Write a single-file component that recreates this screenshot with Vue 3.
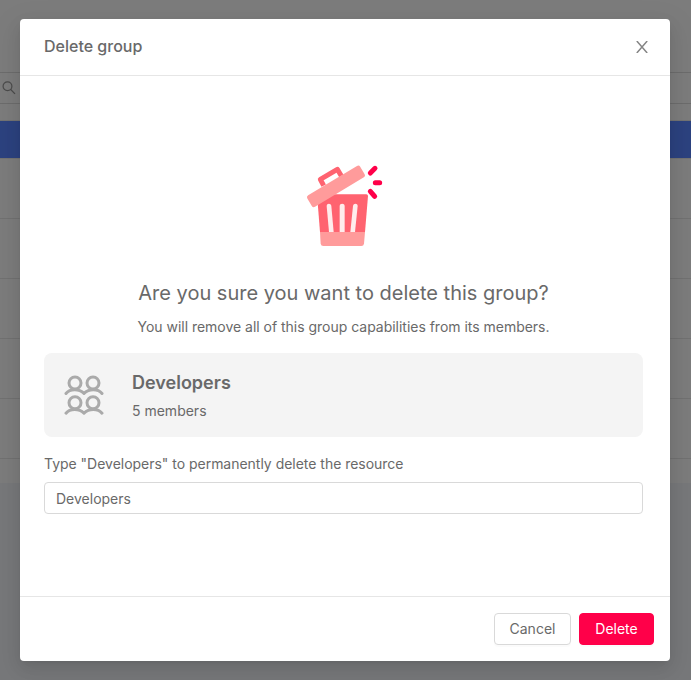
<script setup>
import { ref } from 'vue'

const confirmation = ref('Developers')
const rows = [60, 60, 60, 60, 60]
</script>

<template>
  <div class="page">
    <div class="backdrop">
      <div class="toolbar">
        <svg class="search" width="14" height="14" viewBox="0 0 14 14">
          <circle cx="5.5" cy="5.3" r="4.4" />
          <path d="M8.7 8.5 13 12.8" />
        </svg>
      </div>
      <div class="table">
        <div class="table-head"></div>
        <div v-for="(row, i) in rows" :key="i" class="row"></div>
        <div class="last-row"></div>
      </div>
    </div>
    <div class="overlay">
      <section class="modal">
        <header class="header">
          <h1>Delete group</h1>
          <svg class="close" width="12" height="12" viewBox="0 0 12 12">
            <path d="M.8 0 11.2 12M11.2 0 .8 12" />
          </svg>
        </header>
        <main class="body">
          <svg class="bin" width="100" height="100" viewBox="0 0 300 300">
            <path d="M66 118H214Q219 118 219 123L210 231H75Z" fill="#ff6370" />
            <path d="M75 231H210L207 266Q206 273 199 273H85Q78 273 77 266Z" fill="#ff9b9b" />
            <g fill="#ffecec">
              <path d="M95 153C95 144 108 144 109 153L116 231H102Z" />
              <path d="M134 153C134 144 149 144 149 153V231H134Z" />
              <path d="M174 153C175 144 188 144 188 153L180 231H166Z" />
            </g>
            <path d="M86 92 76 73 127 43 139 63" fill="none" stroke="#ff6370" stroke-width="15" stroke-linejoin="round" />
            <rect x="-92.5" y="-20" width="185" height="40" rx="7" transform="translate(123 94) rotate(-31)" fill="#ff9b9b" />
            <g stroke="#ff0049" stroke-width="15" stroke-linecap="round">
              <path d="M226 54 240 40M241 83H254M226 109 239 124" />
            </g>
          </svg>
          <h2>Are you sure you want to delete this group?</h2>
          <p class="description">You will remove all of this group capabilities from its members.</p>
          <div class="card">
            <svg class="people" width="40" height="40" viewBox="0 0 40 40">
              <circle cx="11" cy="8" r="6" />
              <circle cx="29" cy="8" r="6" />
              <path d="M2 18.5C6 13.5 15 13.5 20 18.5C25 13.5 34 13.5 38 18.5" />
              <circle cx="11" cy="27.8" r="6" />
              <circle cx="29" cy="27.8" r="6" />
              <path d="M2 38.2C6 33.2 15 33.2 20 38.2C25 33.2 34 33.2 38 38.2" />
            </svg>
            <div>
              <h3>Developers</h3>
              <p>5 members</p>
            </div>
          </div>
          <label for="confirm">Type "Developers" to permanently delete the resource</label>
          <input id="confirm" v-model="confirmation" type="text" />
        </main>
        <footer class="footer">
          <button class="cancel">Cancel</button>
          <button class="delete">Delete</button>
        </footer>
      </section>
    </div>
  </div>
</template>

<style>
body { background: #77787a; overflow: hidden; }
</style>

<style scoped>
* { box-sizing: border-box; }
h1, h2, h3, p { margin: 0; font-weight: inherit; }
.page {
  display: grid;
  height: 680px;
  font: 400 14px/22px Inter, sans-serif;
  color: #696969;
}
.backdrop, .overlay { grid-area: 1 / 1; }
.backdrop { background: #77787a; }
.toolbar {
  height: 32px;
  border: solid #6c6c6c;
  border-width: 1px 0;
  padding: 8px 2px;
}
.backdrop::before { content: ''; display: block; height: 72px; background: #7c7c7c; }
.toolbar, .table { background: #7c7c7c; }
.search { display: block; fill: none; stroke: #4b4b4b; stroke-width: 1.2; }
.table { padding-top: 16px; }
.table-head {
  height: 39px;
  background: #2c427f;
  border: solid #737373;
  border-width: 1px 0;
}
.row { height: 60px; border-bottom: 1px solid #717171; }
.last-row { height: 24px; }
.overlay { padding: 19px 21px 19px 20px; }
.modal {
  display: flex;
  flex-direction: column;
  height: 642px;
  background: #fff;
  border-radius: 4px;
  box-shadow: 0 3px 6px -4px rgba(0, 0, 0, .12), 0 6px 16px rgba(0, 0, 0, .08), 0 9px 28px 8px rgba(0, 0, 0, .05);
}
.header {
  display: flex;
  align-items: center;
  justify-content: space-between;
  height: 57px;
  padding: 0 22px 0 24px;
  border-bottom: 1px solid #e6e6e6;
}
.header h1 { font-size: 16px; line-height: 24px; font-weight: 500; margin-top: -2px; }
.close { fill: none; stroke: #858585; stroke-width: 1.5; }
.body {
  flex: 1;
  display: flex;
  flex-direction: column;
  padding: 79px 27px 0 24px;
}
.bin { align-self: center; margin-left: 2px; }
h2 { align-self: center; font-size: 20px; line-height: 30px; margin-top: 23px; }
.description, label { letter-spacing: -.02px; }
.description { align-self: center; margin-top: 8px; }
.card {
  display: flex;
  align-items: center;
  gap: 28px;
  height: 84px;
  margin-top: 15px;
  padding: 0 20px;
  background: #f4f4f4;
  border-radius: 8px;
}
.people { fill: none; stroke: #aaa; stroke-width: 3; stroke-linecap: round; stroke-linejoin: round; }
h3 { font-size: 18px; line-height: 28px; font-weight: 600; }
.card p { margin-top: 3px; }
label { margin-top: 16px; }
input {
  width: 100%;
  height: 32px;
  margin-top: 7px;
  padding: 1px 11px 0;
  border: 1px solid #d9d9d9;
  border-radius: 4px;
  font: inherit;
  color: inherit;
  outline: none;
}
.footer {
  display: flex;
  justify-content: flex-end;
  gap: 8px;
  height: 65px;
  padding: 16px 16px 0;
  border-top: 1px solid #e6e6e6;
}
button {
  height: 32px;
  padding: 0;
  border: 1px solid #d9d9d9;
  border-radius: 4px;
  background: #fff;
  color: inherit;
  font: inherit;
  box-shadow: 0 2px 0 rgba(0, 0, 0, .015);
}
.cancel { width: 77px; }
.delete { width: 75px; border-color: #ff0049; background: #ff0049; color: #fff; }
</style>
